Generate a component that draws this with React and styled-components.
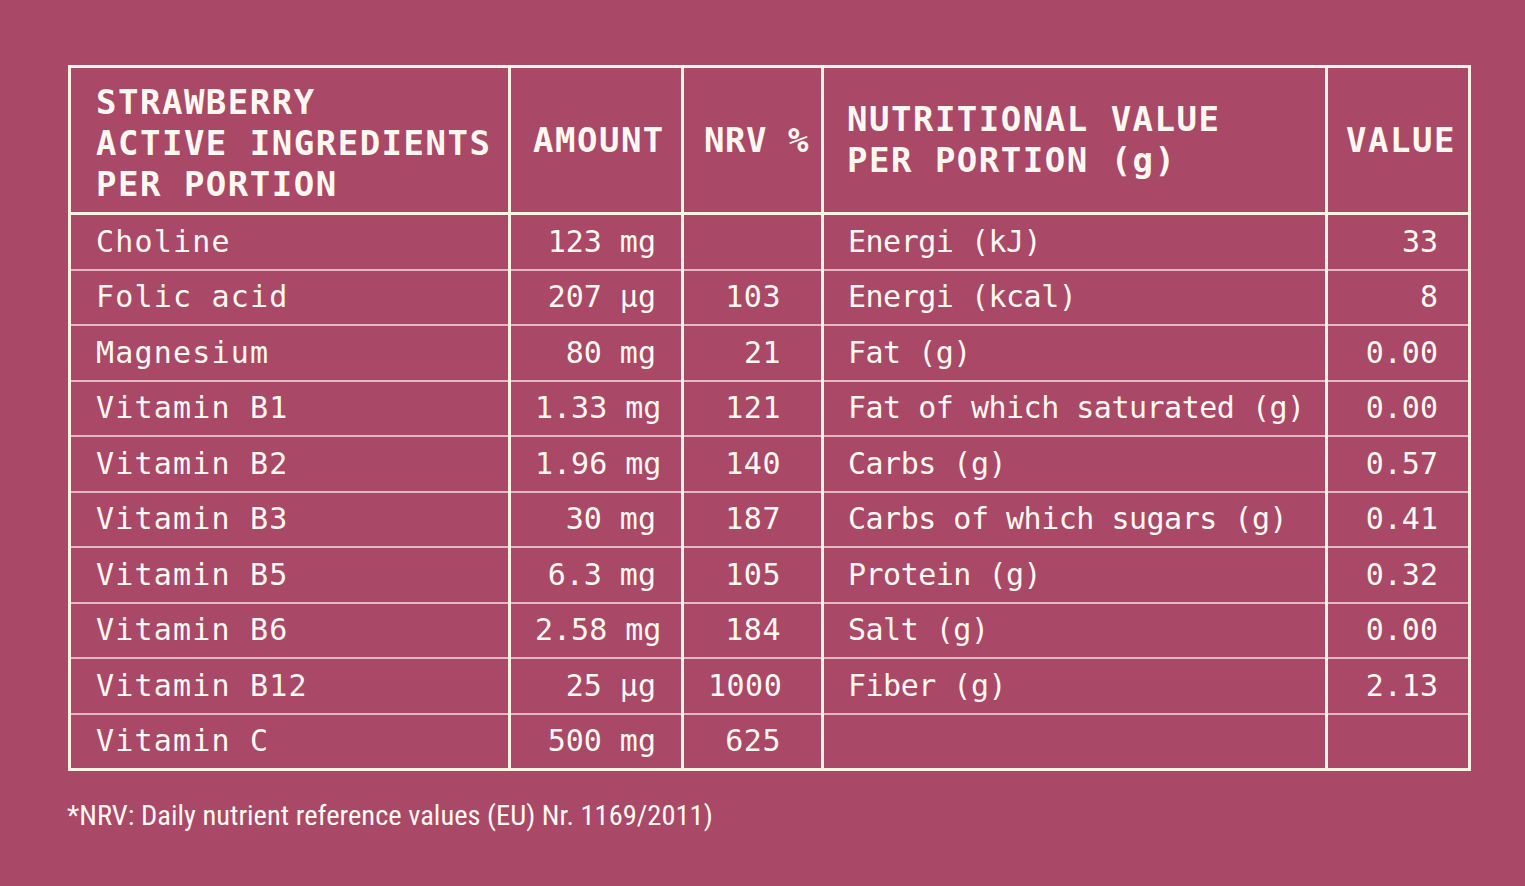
import React from "react";
import styled, { createGlobalStyle } from "styled-components";

const GlobalStyle = createGlobalStyle`
  html, body {
    margin: 0;
    padding: 0;
    background-color: #a94867;
  }
`;

const Page = styled.div`
  min-height: 886px;
  padding: 65px 55px 0 68px;
  box-sizing: border-box;
  background-color: #a94867;
  color: #fff8f1;
`;

const Table = styled.table`
  width: 1400px;
  table-layout: fixed;
  border-collapse: collapse;
  border: 3px solid #fff3e4;
`;

const HeadCell = styled.th`
  height: ${({ $top }) => 144 - ($top || 0)}px;
  padding: ${({ $top }) => $top || 0}px 8px 0 ${({ $pad }) => $pad || 22}px;
  border: 3px solid #fff3e4;
  text-align: left;
  vertical-align: middle;
  font-family: "DejaVu Sans Mono", "Liberation Mono", monospace;
  font-weight: 700;
  font-size: 34px;
  line-height: 41px;
  letter-spacing: ${({ $spacing }) => ($spacing != null ? $spacing : 1.5)}px;
  white-space: nowrap;
`;

const Cell = styled.td`
  height: 53.5px;
  padding: 0 ${({ $right }) => $right || 24}px 0 ${({ $left }) => $left || 24}px;
  border-top: 2px solid rgba(255, 232, 232, 0.7);
  border-bottom: 2px solid rgba(255, 232, 232, 0.7);
  border-left: 3px solid #fff3e4;
  border-right: 3px solid #fff3e4;
  text-align: ${({ $align }) => $align || "left"};
  vertical-align: middle;
  font-family: "DejaVu Sans Mono", "Liberation Mono", monospace;
  font-size: 30px;
  line-height: 36px;
  letter-spacing: ${({ $spacing }) => $spacing || 0}px;
  white-space: nowrap;
`;

const Note = styled.p`
  margin: 28px 0 0 -1px;
  font-family: "Roboto Condensed", "Liberation Sans Narrow", Roboto, sans-serif;
  font-size: 28.5px;
  line-height: 34px;
  color: #fff8f1;
`;

const ingredients = [
  ["Choline", "123 mg", ""],
  ["Folic acid", "207 µg", "103"],
  ["Magnesium", "80 mg", "21"],
  ["Vitamin B1", "1.33 mg", "121"],
  ["Vitamin B2", "1.96 mg", "140"],
  ["Vitamin B3", "30 mg", "187"],
  ["Vitamin B5", "6.3 mg", "105"],
  ["Vitamin B6", "2.58 mg", "184"],
  ["Vitamin B12", "25 µg", "1000"],
  ["Vitamin C", "500 mg", "625"],
];

const nutrition = [
  ["Energi (kJ)", "33"],
  ["Energi (kcal)", "8"],
  ["Fat (g)", "0.00"],
  ["Fat of which saturated (g)", "0.00"],
  ["Carbs (g)", "0.57"],
  ["Carbs of which sugars (g)", "0.41"],
  ["Protein (g)", "0.32"],
  ["Salt (g)", "0.00"],
  ["Fiber (g)", "2.13"],
  ["", ""],
];

function App() {
  return (
    <Page>
      <GlobalStyle />
      <Table>
        <colgroup>
          <col style={{ width: 440 }} />
          <col style={{ width: 173 }} />
          <col style={{ width: 140 }} />
          <col style={{ width: 504 }} />
          <col style={{ width: 143 }} />
        </colgroup>
        <thead>
          <tr>
            <HeadCell $pad={25} $top={6}>
              STRAWBERRY
              <br />
              ACTIVE INGREDIENTS
              <br />
              PER PORTION
            </HeadCell>
            <HeadCell>AMOUNT</HeadCell>
            <HeadCell $pad={20} $spacing={0.5}>
              NRV %
            </HeadCell>
            <HeadCell $pad={23}>
              NUTRITIONAL VALUE
              <br />
              PER PORTION (g)
            </HeadCell>
            <HeadCell $pad={18}>VALUE</HeadCell>
          </tr>
        </thead>
        <tbody>
          {ingredients.map(([name, amount, nrv], i) => (
            <tr key={name}>
              <Cell $left={25} $spacing={1.2}>
                {name}
              </Cell>
              <Cell $align="right" $right={25}>
                {amount}
              </Cell>
              <Cell $align="right" $right={40} $spacing={0.5}>
                {nrv}
              </Cell>
              <Cell $left={24} $spacing={-0.5}>
                {nutrition[i][0]}
              </Cell>
              <Cell $align="right" $right={30}>
                {nutrition[i][1]}
              </Cell>
            </tr>
          ))}
        </tbody>
      </Table>
      <Note>*NRV: Daily nutrient reference values (EU) Nr. 1169/2011)</Note>
    </Page>
  );
}

export default App;
